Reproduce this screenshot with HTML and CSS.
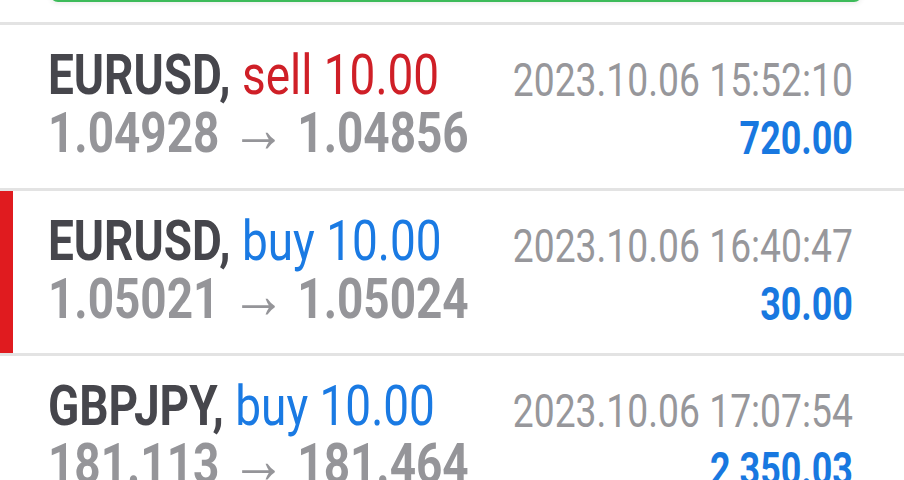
FILE: index.html
```html
<!DOCTYPE html>
<html lang="en">

<head>
  <meta charset="UTF-8" />
  <meta name="viewport" content="width=device-width, initial-scale=1.0" />
  <title>History</title>
  <link rel="stylesheet" href="styles.css">
</head>

<body>

  <div class="top-bar">
    <div class="report-btn"></div>
  </div>

  <div class="trade-list">
    <div class="trade">
      <div class="trade-main">
        <div class="trade-title">
          <span class="symbol">EURUSD,</span> <span class="side sell">sell 10.00</span>
        </div>
        <div class="trade-prices">1.04928 <span class="arrow">&rarr;</span> 1.04856</div>
      </div>
      <div class="trade-side">
        <div class="trade-time">2023.10.06 15:52:10</div>
        <div class="trade-profit">720.00</div>
      </div>
    </div>

    <div class="trade selected">
      <div class="trade-main">
        <div class="trade-title">
          <span class="symbol">EURUSD,</span> <span class="side buy">buy 10.00</span>
        </div>
        <div class="trade-prices">1.05021 <span class="arrow">&rarr;</span> 1.05024</div>
      </div>
      <div class="trade-side">
        <div class="trade-time">2023.10.06 16:40:47</div>
        <div class="trade-profit">30.00</div>
      </div>
    </div>

    <div class="trade">
      <div class="trade-main">
        <div class="trade-title">
          <span class="symbol">GBPJPY,</span> <span class="side buy">buy 10.00</span>
        </div>
        <div class="trade-prices">181.113 <span class="arrow">&rarr;</span> 181.464</div>
      </div>
      <div class="trade-side">
        <div class="trade-time">2023.10.06 17:07:54</div>
        <div class="trade-profit">2 350.03</div>
      </div>
    </div>
  </div>

</body>

</html>
```

FILE: styles.css
```css
body {
  margin: 0;
  background: #fff;
  font-family: Roboto, "Liberation Sans", sans-serif;
  overflow: hidden;
}

.top-bar {
  height: 22px;
  overflow: hidden;
  padding: 0 42px 0 50px;
}

.report-btn {
  height: 40px;
  margin-top: -42px;
  border: 2px solid #3dbb5a;
  border-radius: 8px;
  box-shadow: 0 2px 5px rgba(0, 0, 0, 0.07);
}

.trade {
  display: flex;
  height: 165.5px;
  box-sizing: border-box;
  padding: 21px 51px 0 48px;
  border-top: 3px solid #e3e3e3;
}

.trade.selected {
  box-shadow: inset 13px 0 0 #e01b1f;
}

/* the app font is a condensed Roboto, so squeeze the regular one */
.trade-main {
  flex: 1 1 auto;
  min-width: 0;
  font-size: 56px;
  line-height: 58px;
  white-space: nowrap;
  transform: scaleX(0.82);
  transform-origin: left center;
}

.symbol {
  font-weight: bold;
  color: #46464c;
}

.side.sell {
  color: #cf1f27;
}

.side.buy {
  color: #1a7ae3;
}

.trade-prices {
  font-weight: bold;
  color: #959599;
}

.arrow {
  font-weight: normal;
  font-size: 1.2em;
  line-height: 0;
}

.trade-side {
  flex: 0 0 auto;
  font-size: 46px;
  line-height: 58px;
  text-align: right;
  white-space: nowrap;
  padding-top: 5px;
}

.trade-time {
  color: #97979b;
  transform: scaleX(0.81);
  transform-origin: right center;
}

.trade-profit {
  font-weight: bold;
  color: #1878e0;
  transform: scaleX(0.78);
  transform-origin: right center;
}
```
